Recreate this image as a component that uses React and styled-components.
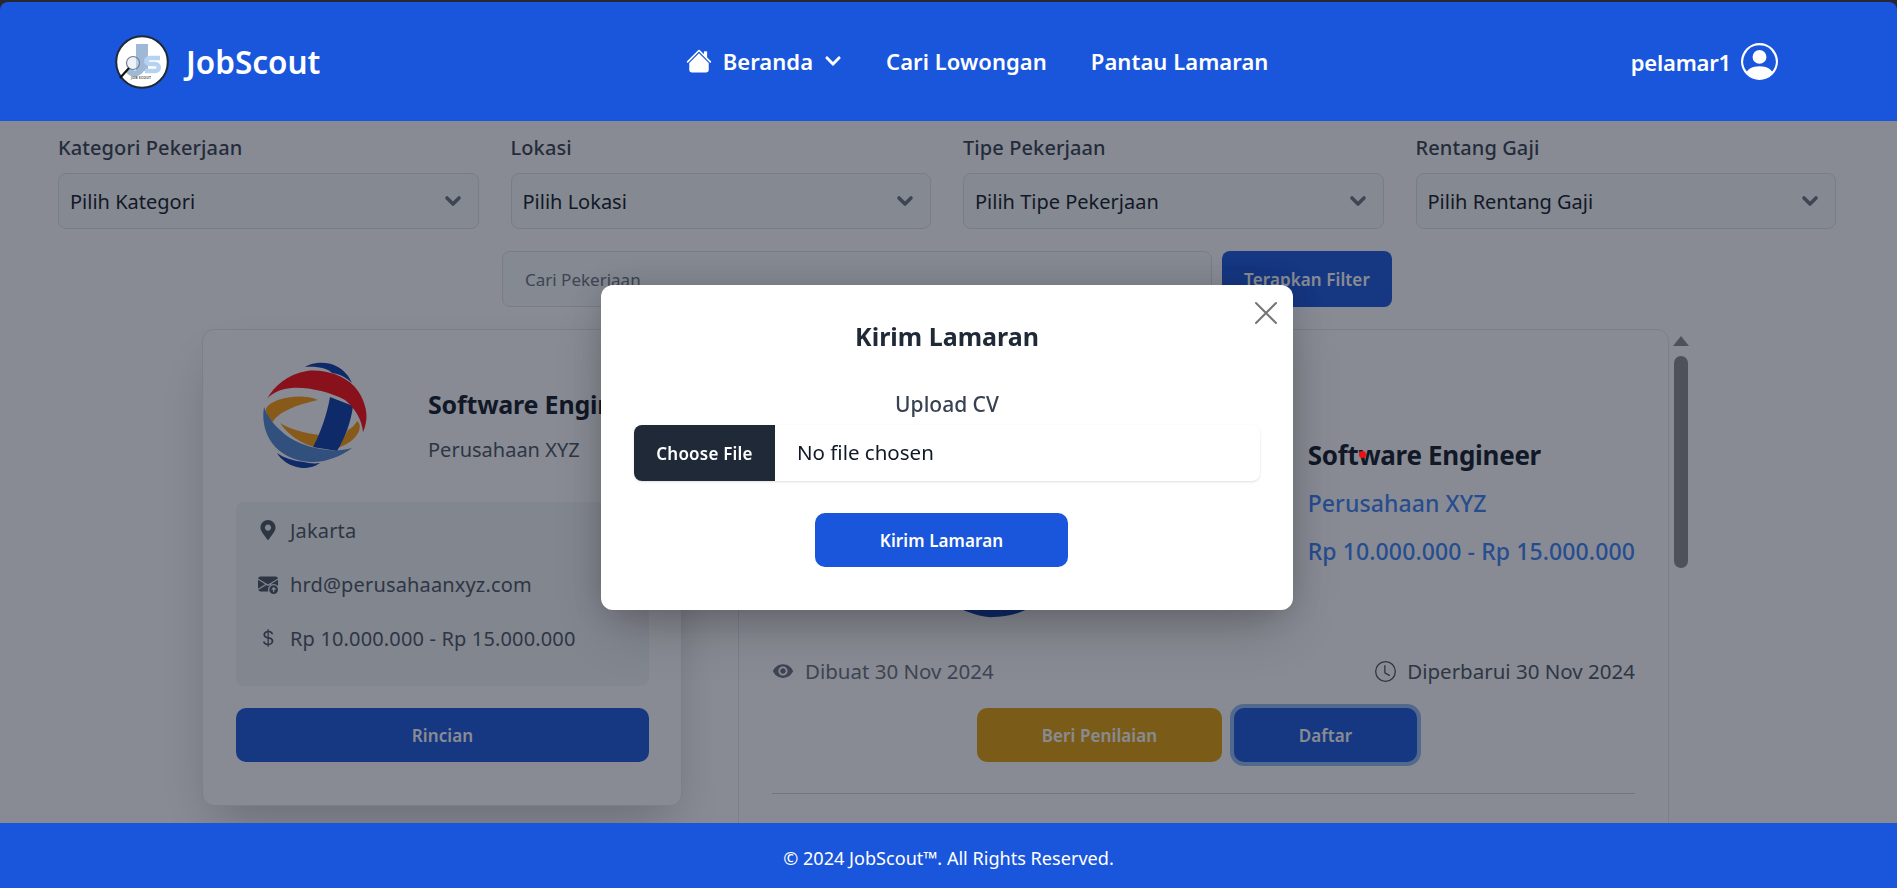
import styled, { createGlobalStyle } from "styled-components";
import { FaChevronDown, FaMapMarkerAlt } from "react-icons/fa";
import { BsPersonCircle, BsEnvelopeArrowUpFill, BsClock, BsHouseFill, BsCurrencyDollar } from "react-icons/bs";
import { MdRemoveRedEye } from "react-icons/md";

const GlobalStyle = createGlobalStyle`
  * { box-sizing: border-box; }
  html, body { margin: 0; padding: 0; height: 100%; }
  body {
    background: #3a3a3c;
    font-family: "Noto Sans", "Open Sans", "Liberation Sans", sans-serif;
    overflow: hidden;
  }
`;

const Page = styled.div`
  height: 100vh;
  padding-top: 2px;
  display: flex;
  flex-direction: column;
`;

const Header = styled.header`
  position: relative;
  z-index: 20;
  height: 119px;
  flex-shrink: 0;
  background: #1a56db;
  border-radius: 8px 8px 0 0;
  color: #fff;
  display: flex;
  align-items: center;
  justify-content: space-between;
  padding: 0 119px 0 115px;
`;

const Brand = styled.div`
  display: flex;
  align-items: center;
  gap: 17px;
  font-size: 31.5px;
  font-weight: 600;
`;

const Nav = styled.nav`
  display: flex;
  align-items: center;
  gap: 44px;
  padding-bottom: 2px;
  margin-left: 3px;
  font-size: 22px;
  font-weight: 600;
  letter-spacing: 0.05px;
`;

const NavItem = styled.span`
  display: flex;
  align-items: center;
  gap: 11px;
`;

const User = styled.div`
  display: flex;
  align-items: center;
  gap: 10px;
  font-size: 22px;
  font-weight: 600;
  letter-spacing: -0.2px;
`;

const Main = styled.main`
  flex: 1;
  min-height: 0;
  overflow: hidden;
  background: #fff;
`;

const Filters = styled.div`
  display: grid;
  grid-template-columns: repeat(4, 1fr);
  gap: 32px;
  padding: 14px 61px 0 58px;
`;

const Field = styled.div`
  display: flex;
  flex-direction: column;
  gap: 13px;
`;

const Label = styled.label`
  font-size: 20px;
  line-height: 25px;
  font-weight: 500;
  letter-spacing: 0.1px;
  color: #374151;
`;

const Select = styled.select`
  appearance: none;
  height: 56px;
  padding: 0 11px;
  border: 1px solid #dfe1e6;
  border-radius: 8px;
  background-color: #f9fafb;
  background-image: url("data:image/svg+xml,%3Csvg xmlns='http://www.w3.org/2000/svg' viewBox='0 0 20 20'%3E%3Cpath stroke='%236B7280' stroke-linecap='round' stroke-linejoin='round' stroke-width='2.4' d='M6 8l4 4 4-4' fill='none'/%3E%3C/svg%3E");
  background-position: right 10px center;
  background-repeat: no-repeat;
  background-size: 30px 30px;
  font: inherit;
  font-size: 20px;
  color: #111827;
`;

const SearchRow = styled.div`
  display: flex;
  justify-content: center;
  gap: 10px;
  margin-top: 22px;
  padding-right: 3px;
`;

const SearchInput = styled.input`
  width: 710px;
  height: 56px;
  padding: 0 22px;
  border: 1px solid #dfe1e6;
  border-radius: 8px;
  background: #f9fafb;
  font: inherit;
  font-size: 17px;
  &::placeholder { color: #6b7280; opacity: 1; }
`;

const Button = styled.button`
  height: 54px;
  width: ${(p) => p.$width || "100%"};
  border: none;
  border-radius: 10px;
  background: ${(p) => p.$bg || "#1a56db"};
  color: #fff;
  font: inherit;
  font-size: 17px;
  font-weight: 600;
  letter-spacing: 0.1px;
  ${(p) => p.$ring && "box-shadow: 0 0 0 4px #93bbf5;"}
`;

const FilterButton = styled(Button)`
  width: 170px;
  height: 56px;
  border-radius: 8px;
`;

const Content = styled.div`
  display: flex;
  align-items: flex-start;
  margin-top: 22px;
  padding: 0 202px;
`;

const Card = styled.div`
  flex-shrink: 0;
  border: 1px solid #e5e7eb;
  border-radius: 12px;
  background: #fff;
`;

const JobCard = styled(Card)`
  width: 480px;
  height: 477px;
  padding: 30px 32px 0 33px;
  box-shadow: 0 25px 50px -12px rgba(0, 0, 0, 0.25);
`;

const JobHead = styled.div`
  display: flex;
  align-items: center;
  gap: 58px;
  padding-left: 24px;
  white-space: nowrap;
`;

const JobText = styled.div`
  padding-top: 18px;
`;

const JobTitle = styled.div`
  font-size: 25px;
  font-weight: 700;
  letter-spacing: -0.2px;
  color: #111827;
`;

const JobCompany = styled.div`
  margin-top: 15px;
  font-size: 20px;
  color: #4b5563;
`;

const InfoBox = styled.div`
  height: 184px;
  margin-top: 30px;
  padding: 1px 22px 0;
  border-radius: 8px;
  background: #f3f4f6;
`;

const InfoRow = styled.div`
  height: 54px;
  display: flex;
  align-items: center;
  gap: 12px;
  font-size: 20px;
  letter-spacing: 0.15px;
  color: #4b5563;
  svg { width: 20px; color: #4b5563; flex-shrink: 0; }
`;

const WideButton = styled(Button)`
  margin-top: 22px;
`;

const DetailCard = styled(Card)`
  width: 931px;
  height: 640px;
  margin-left: 56px;
  padding: 22px 33px 0;
`;

const DetailHead = styled.div`
  display: flex;
  align-items: center;
  justify-content: space-between;
  padding-left: 115px;
`;

const DetailText = styled.div`
  padding-top: 24px;
`;

const DetailTitle = styled.div`
  margin-bottom: -2px;
  font-size: 26px;
  font-weight: 700;
  letter-spacing: -0.3px;
  color: #111827;
`;

const DetailSub = styled.div`
  margin-top: 16px;
  font-size: 23px;
  font-weight: 500;
  letter-spacing: 0.1px;
  color: #3b82f6;
`;

const Meta = styled.div`
  display: flex;
  justify-content: space-between;
  margin-top: 30px;
  font-size: 20.5px;
`;

const MetaItem = styled.span`
  display: flex;
  align-items: center;
  gap: 11px;
  color: ${(p) => p.$color};
`;

const Actions = styled.div`
  display: flex;
  justify-content: center;
  gap: 12px;
  margin-top: 23px;
  padding-right: 13px;
`;

const Divider = styled.hr`
  margin: 31px 0 0;
  border: none;
  border-top: 1px solid #d1d5db;
`;

const ScrollTrack = styled.div`
  width: 16px;
  margin: 7px 0 0 4px;
  display: flex;
  flex-direction: column;
  align-items: center;
  gap: 10px;
`;

const ScrollArrow = styled.div`
  border-left: 8px solid transparent;
  border-right: 8px solid transparent;
  border-bottom: 10px solid #8b8b8d;
`;

const ScrollThumb = styled.div`
  width: 14px;
  height: 212px;
  border-radius: 7px;
  background: #8b8b8d;
`;

const Overlay = styled.div`
  position: fixed;
  inset: 0;
  z-index: 10;
  background: rgba(17, 24, 39, 0.5);
  display: flex;
  align-items: center;
  justify-content: center;
  padding: 7px 3px 0 0;
`;

const Modal = styled.div`
  position: relative;
  width: 692px;
  height: 325px;
  padding: 33px 33px 0;
  border-radius: 12px;
  background: #fff;
  box-shadow: 0 25px 50px -12px rgba(0, 0, 0, 0.25), 0 0 30px rgba(0, 0, 0, 0.15);
`;

const CloseButton = styled.button`
  position: absolute;
  top: 16px;
  right: 15px;
  width: 24px;
  height: 24px;
  padding: 0;
  border: none;
  background: none;
  color: #757575;
`;

const ModalTitle = styled.h2`
  margin: 0;
  text-align: center;
  font-size: 25px;
  line-height: 36px;
  font-weight: 700;
  color: #1f2937;
`;

const UploadLabel = styled.div`
  margin-top: 35px;
  text-align: center;
  font-size: 21px;
  line-height: 30px;
  font-weight: 500;
  color: #374151;
`;

const FileField = styled.label`
  display: flex;
  align-items: center;
  height: 56px;
  margin-top: 6px;
  border-radius: 8px;
  background: #fff;
  box-shadow: 0 1px 3px rgba(0, 0, 0, 0.1), 0 1px 2px -1px rgba(0, 0, 0, 0.1);
  overflow: hidden;
`;

const FileButton = styled.span`
  width: 141px;
  height: 100%;
  display: flex;
  align-items: center;
  justify-content: center;
  background: #1f2937;
  color: #fff;
  font-size: 17px;
  font-weight: 600;
  letter-spacing: 0.2px;
`;

const FileName = styled.span`
  padding: 0 0 2px 22px;
  font-size: 20.5px;
  color: #111827;
`;

const SubmitRow = styled.div`
  display: flex;
  justify-content: center;
  margin-top: 32px;
  padding-right: 11px;
`;

const Footer = styled.footer`
  position: relative;
  z-index: 20;
  height: 65px;
  flex-shrink: 0;
  padding-top: 4px;
  background: #1a56db;
  color: #fff;
  display: flex;
  align-items: center;
  justify-content: center;
  font-size: 18.1px;
`;

const RedDot = styled.div`
  position: fixed;
  z-index: 30;
  left: 1359px;
  top: 451px;
  width: 7px;
  height: 7px;
  border-radius: 50%;
  background: #ee1111;
`;

const LogoSvg = styled.svg`
  flex-shrink: 0;
`;

const Logo = ({ width, height }) => (
  <LogoSvg width={width} height={height} viewBox="30 20 110 112">
    <path fill="#0d3ca9" d="M75 27C82 22 97 21 106 26C114 30 119 36 122 43C117 38 110 34 102 33C99 29 88 26 75 27Z" />
    <path fill="#ff9c0b" d="M88 60C76 55 60 56 48 60C40 63 35 67 36 71C37 76 40 80 43 82C46 75 60 66 88 60Z" />
    <path fill="#ff9c0b" d="M50 83C60 89 74 93 90 95L88 108C72 104 60 97 50 83Z" />
    <path fill="#ff9c0b" d="M118 90C122 88 125 85 127 81C130 83 131 88 128 93C124 100 118 104 108 108Z" />
    <path fill="#0d3ca9" d="M100 57L123 66C121 82 115 98 107 111L83 107C91 92 97 74 100 57Z" />
    <path fill="#ff0a11" d="M37 59C44 46 58 34 77 31C92 29 112 34 124 46C134 57 138 72 136 82C135 87 134 90 133 92C132 80 125 68 115 60C100 52 78 47 62 48C50 49 42 53 37 59Z" />
    <path fill="#5388d3" d="M34 67C32 78 34 92 42 103C50 114 64 121 80 122C95 123 112 116 122 108C114 110 106 111 98 110C80 108 62 102 50 90C43 84 37 75 34 67Z" />
    <path fill="#0d3ca9" d="M47 113C50 119 60 127 72 128C80 128 86 126 90 123C84 124 78 123 74 122C64 121 54 118 47 113Z" />
  </LogoSvg>
);

const BrandMark = () => (
  <svg width="54" height="54" viewBox="0 0 54 54">
    <defs>
      <filter id="soft" x="-20%" y="-20%" width="140%" height="140%">
        <feGaussianBlur stdDeviation="0.7" />
      </filter>
    </defs>
    <circle cx="27" cy="27" r="25.8" fill="#fff" stroke="#1f2937" strokeWidth="2" />
    <g filter="url(#soft)">
      <rect x="21" y="9" width="12" height="27" fill="#9fb8d6" />
      <path d="M27 30c0 9-9 11-14 5" fill="none" stroke="#9fb8d6" strokeWidth="6" />
      <path d="M45 23h-10c-5 0-5 6 0 6h5c5 0 5 7 0 7h-10" fill="none" stroke="#b5d2f0" strokeWidth="4.5" />
    </g>
    <circle cx="18" cy="28" r="6.5" fill="#dbe6f1" fillOpacity="0.5" stroke="#6f7f90" strokeWidth="1.2" />
    <path d="M14 33L5 43" stroke="#111" strokeWidth="2.2" />
    <text x="16" y="44" fontSize="3.5" fontWeight="700" fill="#555" textLength="20">JOB SCOUT</text>
  </svg>
);

const CloseIcon = () => (
  <svg width="24" height="24" viewBox="0 0 24 24" stroke="currentColor" strokeWidth="2" strokeLinecap="round">
    <path d="M2 2L22 22M22 2L2 22" />
  </svg>
);

const filters = [
  { label: "Kategori Pekerjaan", option: "Pilih Kategori" },
  { label: "Lokasi", option: "Pilih Lokasi" },
  { label: "Tipe Pekerjaan", option: "Pilih Tipe Pekerjaan" },
  { label: "Rentang Gaji", option: "Pilih Rentang Gaji" },
];

const App = () => {
  return (
    <Page>
      <GlobalStyle />
      <Header>
        <Brand>
          <BrandMark />
          JobScout
        </Brand>
        <Nav>
          <NavItem>
            <BsHouseFill size={26} />
            Beranda
            <FaChevronDown size={18} />
          </NavItem>
          <NavItem>Cari Lowongan</NavItem>
          <NavItem>Pantau Lamaran</NavItem>
        </Nav>
        <User>
          pelamar1
          <BsPersonCircle size={37} />
        </User>
      </Header>

      <Main>
        <Filters>
          {filters.map((f) => (
            <Field key={f.label}>
              <Label>{f.label}</Label>
              <Select defaultValue={f.option}>
                <option>{f.option}</option>
              </Select>
            </Field>
          ))}
        </Filters>

        <SearchRow>
          <SearchInput placeholder="Cari Pekerjaan" />
          <FilterButton>Terapkan Filter</FilterButton>
        </SearchRow>

        <Content>
          <JobCard>
            <JobHead>
              <Logo width={110} height={112} />
              <JobText>
                <JobTitle>Software Engineer</JobTitle>
                <JobCompany>Perusahaan XYZ</JobCompany>
              </JobText>
            </JobHead>
            <InfoBox>
              <InfoRow>
                <FaMapMarkerAlt size={20} />
                Jakarta
              </InfoRow>
              <InfoRow>
                <BsEnvelopeArrowUpFill size={22} />
                hrd@perusahaanxyz.com
              </InfoRow>
              <InfoRow>
                <BsCurrencyDollar size={22} />
                Rp 10.000.000 - Rp 15.000.000
              </InfoRow>
            </InfoBox>
            <WideButton>Rincian</WideButton>
          </JobCard>

          <DetailCard>
            <DetailHead>
              <Logo width={270} height={275} />
              <DetailText>
                <DetailTitle>Software Engineer</DetailTitle>
                <DetailSub>Perusahaan XYZ</DetailSub>
                <DetailSub>Rp 10.000.000 - Rp 15.000.000</DetailSub>
              </DetailText>
            </DetailHead>
            <Meta>
              <MetaItem $color="#6b7280">
                <MdRemoveRedEye size={22} />
                Dibuat 30 Nov 2024
              </MetaItem>
              <MetaItem $color="#4b5563">
                <BsClock size={21} />
                Diperbarui 30 Nov 2024
              </MetaItem>
            </Meta>
            <Actions>
              <Button $width="245px" $bg="#e3a008">Beri Penilaian</Button>
              <Button $width="183px" $ring>Daftar</Button>
            </Actions>
            <Divider />
          </DetailCard>

          <ScrollTrack>
            <ScrollArrow />
            <ScrollThumb />
          </ScrollTrack>
        </Content>
      </Main>

      <Overlay>
        <Modal>
          <CloseButton aria-label="Tutup">
            <CloseIcon />
          </CloseButton>
          <ModalTitle>Kirim Lamaran</ModalTitle>
          <UploadLabel>Upload CV</UploadLabel>
          <FileField>
            <FileButton>Choose File</FileButton>
            <FileName>No file chosen</FileName>
          </FileField>
          <SubmitRow>
            <Button $width="253px">Kirim Lamaran</Button>
          </SubmitRow>
        </Modal>
      </Overlay>

      <RedDot />

      <Footer>© 2024 JobScout™. All Rights Reserved.</Footer>
    </Page>
  );
};

export default App;
